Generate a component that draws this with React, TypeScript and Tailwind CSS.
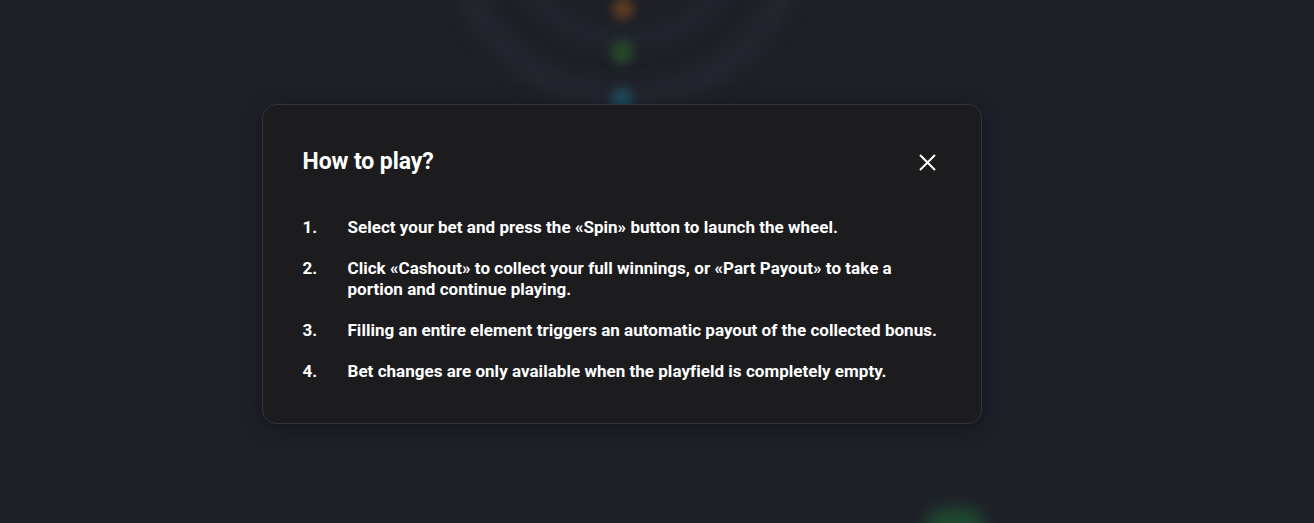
import React from "react";

const rules = [
  ["Select your bet and press the «Spin» button to launch the wheel."],
  [
    "Click «Cashout» to collect your full winnings, or «Part Payout» to take a",
    "portion and continue playing.",
  ],
  ["Filling an entire element triggers an automatic payout of the collected bonus."],
  ["Bet changes are only available when the playfield is completely empty."],
];

function Backdrop() {
  return (
    <div className="absolute inset-0 overflow-hidden bg-[#1e2028]">
      {/* blurred wheel behind the overlay */}
      <div className="absolute left-[440px] top-[-260px] w-[370px] h-[370px] rounded-full border-[26px] border-[#23262f] blur-[8px]" />
      <div className="absolute left-[500px] top-[-200px] w-[250px] h-[250px] rounded-full border-[20px] border-[#22252e] blur-[8px]" />
      <div className="absolute left-[612px] top-[-2px] w-[22px] h-[22px] rounded-full bg-[#5a3a22] blur-[5px]" />
      <div className="absolute left-[611px] top-[40px] w-[22px] h-[24px] rounded-full bg-[#27472a] blur-[5px]" />
      <div className="absolute left-[611px] top-[88px] w-[22px] h-[22px] rounded-full bg-[#1f4a5c] blur-[5px]" />
      <div className="absolute left-[925px] top-[508px] w-[60px] h-[40px] rounded-full bg-[#1f4a30] blur-[8px]" />
    </div>
  );
}

export default function App() {
  return (
    <div
      className="relative w-[1314px] h-[523px] overflow-hidden"
      style={{ fontFamily: "Roboto, 'Liberation Sans', sans-serif" }}
    >
      <Backdrop />
      <div className="relative flex h-full items-start justify-center pr-[71px] pt-[104px]">
        <div className="w-[720px] h-[320px] rounded-[14px] border border-[#34353a] bg-[#1c1c1f] px-[40px] pt-[44px] shadow-[0_4px_20px_rgba(0,0,0,0.35)]">
          <div className="flex items-center justify-between">
            <h2 className="text-[23px] font-bold leading-[26px] text-white tracking-[-0.1px]">
              How to play?
            </h2>
            <button className="flex h-[26px] w-[26px] items-center justify-center text-white">
              <svg width="17" height="17" viewBox="0 0 17 17" fill="none">
                <path d="M1 1 L16 16 M16 1 L1 16" stroke="currentColor" strokeWidth="2" />
              </svg>
            </button>
          </div>
          <ol className="mt-[42px] flex flex-col gap-[20px]">
            {rules.map((lines, i) => (
              <li key={i} className="flex text-[17px] font-bold leading-[21px] text-white tracking-[0.03px]">
                <span className="w-[45px] shrink-0">{i + 1}.</span>
                <span>
                  {lines.map((l, j) => (
                    <span key={j} className="block">
                      {l}
                    </span>
                  ))}
                </span>
              </li>
            ))}
          </ol>
        </div>
      </div>
    </div>
  );
}
